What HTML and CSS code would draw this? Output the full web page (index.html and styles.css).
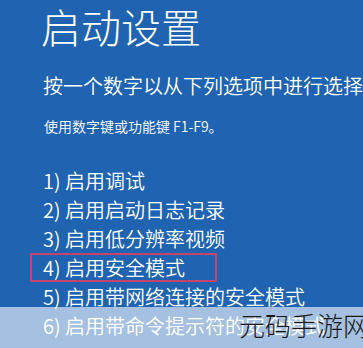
FILE: index.html
```html
<!DOCTYPE html>
<html lang="zh-CN">
<head>
<meta charset="utf-8">
<link rel="stylesheet" href="styles.css">
</head>
<body>
<div class="screen">
  <h1 class="title">启动设置</h1>
  <p class="subtitle">按一个数字以从下列选项中进行选择：</p>
  <p class="hint">使用数字键或功能键 F1-F9。</p>
  <ol class="options">
    <li class="opt">1) 启用调试</li>
    <li class="opt">2) 启用启动日志记录</li>
    <li class="opt">3) 启用低分辨率视频</li>
    <li class="opt selected">4) 启用安全模式</li>
    <li class="opt">5) 启用带网络连接的安全模式</li>
    <li class="opt">6) 启用带命令提示符的安全模式</li>
  </ol>
  <div class="band"></div>
  <div class="watermark">元码手游网</div>
</div>
</body>
</html>
```
FILE: styles.css
```css
html, body {
  margin: 0;
  padding: 0;
}
body {
  background: #1f63b1;
  font-family: "Noto Sans CJK SC", "Noto Sans", sans-serif;
  color: #fff;
}
.screen {
  position: relative;
  width: 363px;
  height: 348px;
  overflow: hidden;
  padding-left: 41px;
  box-sizing: border-box;
  white-space: nowrap;
}
.title {
  margin: 0;
  padding-top: 2px;
  font-size: 40px;
  font-weight: 300;
  line-height: 48px;
}
.subtitle {
  margin: 23px 0 0 2px;
  font-size: 20px;
  font-weight: 350;
  line-height: 26px;
}
.hint {
  margin: 17px 0 0 3px;
  font-size: 14px;
  font-weight: 350;
  line-height: 20px;
}
.options {
  list-style: none;
  margin: 30px 0 0 2px;
  padding: 0;
}
.opt {
  font-size: 20px;
  font-weight: 350;
  line-height: 29px;
}
.selected {
  position: relative;
}
.selected::after {
  content: "";
  position: absolute;
  left: -13px;
  top: 0px;
  width: 183px;
  height: 25px;
  border: 2px solid #c4436f;
}
.band {
  position: absolute;
  left: 0;
  top: 307px;
  width: 363px;
  height: 41px;
  background: rgba(255, 255, 255, 0.6);
}
.watermark {
  position: absolute;
  left: 239px;
  top: 306px;
  font-size: 26px;
  font-weight: 300;
  line-height: 38px;
  color: #1a1a1a;
}
```
